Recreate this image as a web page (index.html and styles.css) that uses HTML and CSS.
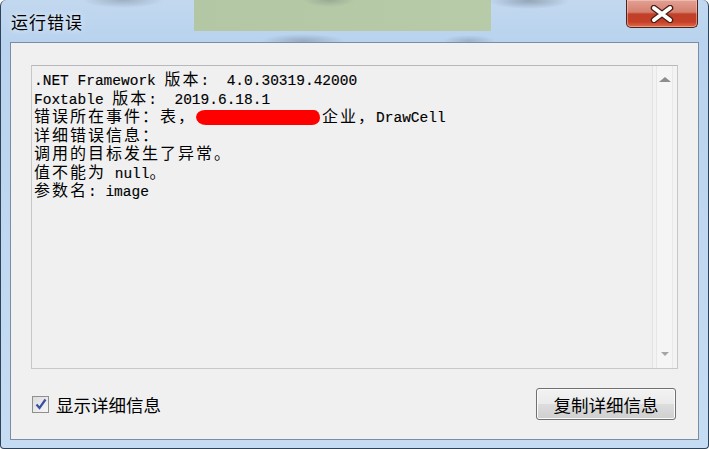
FILE: index.html
```html
<!DOCTYPE html>
<html lang="zh-CN">
<head>
  <meta charset="UTF-8">
  <meta name="viewport" content="width=device-width, initial-scale=1.0">
  <title>运行错误</title>
  <link rel="stylesheet" href="styles.css">
</head>
<body>

  <div class="window">
    <div class="titlebar">
      <span class="title">运行错误</span>
      <button class="close-btn" title="关闭">
        <svg width="26" height="18" viewBox="0 0 26 18">
          <path d="M5 3 L21 15 M21 3 L5 15" stroke="#4b1d14" stroke-width="6.5" stroke-linecap="round"/>
          <path d="M5 3 L21 15 M21 3 L5 15" stroke="#ffffff" stroke-width="4" stroke-linecap="round"/>
        </svg>
      </button>
    </div>

    <div class="client">
      <div class="details">
        <div class="text">
          <div class="line"><span class="en">.NET Framework </span>版本<span class="en">:  4.0.30319.42000</span></div>
          <div class="line"><span class="en">Foxtable </span>版本<span class="en">:  2019.6.18.1</span></div>
          <div class="line">错误所在事件：表，<span class="redact"></span>企业，<span class="en">DrawCell</span></div>
          <div class="line">详细错误信息：</div>
          <div class="line">调用的目标发生了异常。</div>
          <div class="line">值不能为<span class="en"> null</span>。</div>
          <div class="line">参数名<span class="en">: image</span></div>
        </div>
        <div class="scrollbar">
          <div class="arrow arrow-up"></div>
          <div class="track"></div>
          <div class="arrow arrow-down"></div>
        </div>
      </div>

      <div class="footer">
        <label class="check">
          <span class="box">
            <svg width="12" height="12" viewBox="0 0 12 12">
              <path d="M1.5 6.5 L4.5 10 L10.5 1.5" fill="none" stroke="#3b4fa3" stroke-width="2.2"/>
            </svg>
          </span>
          显示详细信息
        </label>
        <button class="copy-btn">复制详细信息</button>
      </div>
    </div>
  </div>

</body>
</html>
```

FILE: styles.css
```css
body {
  margin: 0;
  background: #ffffff;
  font-family: "Noto Sans CJK SC", "Microsoft YaHei", sans-serif;
}
.window {
  width: 709px;
  height: 449px;
  box-sizing: border-box;
  padding: 0 9px 8px 9px;
  display: flex;
  flex-direction: column;
  border: 1px solid #2f4358;
  border-top: none;
  border-radius: 6px 6px 4px 4px;
  background:
    radial-gradient(ellipse 40px 8px at 122px 0px, rgba(90,100,110,0.35), transparent),
    radial-gradient(ellipse 26px 7px at 328px 0px, rgba(90,100,110,0.3), transparent),
    radial-gradient(ellipse 40px 8px at 528px 1px, rgba(80,90,100,0.4), transparent),
    radial-gradient(ellipse 42px 7px at 302px 41px, rgba(70,80,95,0.3), transparent),
    radial-gradient(ellipse 26px 6px at 468px 41px, rgba(70,80,95,0.25), transparent),
    linear-gradient(to right, transparent 193px, #b4c7a4 193px, #b8cba8 490px, transparent 490px) 0 0 / 100% 31px no-repeat,
    linear-gradient(to bottom, #c2d8ef, #b9d3ee 40px, #c6dcf3 100%);
  overflow: hidden;
}
.titlebar {
  height: 42px;
  flex-shrink: 0;
  display: flex;
  align-items: flex-start;
}
.title {
  margin-top: 9px;
  margin-left: 1px;
  font-size: 17px;
  letter-spacing: 1px;
  color: #000;
  text-shadow: 0 0 6px rgba(255,255,255,0.9);
}
.close-btn {
  margin-left: auto;
  margin-right: 1px;
  width: 72px;
  height: 28px;
  padding: 0;
  border: 1px solid #4d231c;
  border-top: none;
  border-radius: 0 0 5px 5px;
  background: linear-gradient(to bottom, #e2a194 0%, #d5806f 45%, #c0402b 52%, #c43f27 80%, #e0694b 100%);
  box-shadow: inset 0 0 0 1px rgba(255,220,210,0.45);
  display: flex;
  align-items: center;
  justify-content: center;
}
.client {
  flex: 1;
  background: #f0f0f0;
  border: 1px solid #7a8da5;
  padding: 22px 20px 0 20px;
  display: flex;
  flex-direction: column;
}
.details {
  height: 304px;
  box-sizing: border-box;
  border: 1px solid #c5c7cb;
  border-top-color: #b6b8bc;
  background: #f0f0f0;
  display: flex;
}
.text {
  flex: 1;
  padding: 3px 0 0 2px;
  font-family: "Noto Sans CJK SC", sans-serif;
  font-size: 16px;
  letter-spacing: 2px;
  color: #000;
}
.line {
  height: 18.5px;
  line-height: 18.5px;
  white-space: pre;
}
.en {
  font-family: "Liberation Mono", "DejaVu Sans Mono", monospace;
  font-size: 14.5px;
  letter-spacing: 0;
  color: #000;
  -webkit-text-stroke: 0.15px #000;
}
.redact {
  display: inline-block;
  width: 124px;
  height: 15px;
  margin-right: 2px;
  vertical-align: -3px;
  background: #ff0000;
  border-radius: 9px 6px 8px 10px / 7px 8px 7px 8px;
}
.scrollbar {
  width: 24px;
  border-left: 1px solid #e2e2e2;
  background: linear-gradient(to right, #f3f3f3 0, #f3f3f3 3px, #e6e6e6 3px, #e6e6e6 4px, #f5f5f5 4px, #f5f5f5 19px, #e8e8e8 19px, #e8e8e8 20px, #f3f3f3 20px);
  display: flex;
  flex-direction: column;
}
.arrow {
  height: 28px;
  display: flex;
  justify-content: center;
}
.arrow-up {
  align-items: flex-start;
}
.arrow-up::before {
  content: "";
  margin-top: 11px;
  border-left: 6px solid transparent;
  border-right: 6px solid transparent;
  border-bottom: 5px solid #8d8d8d;
}
.arrow-down {
  align-items: flex-end;
}
.arrow-down::before {
  content: "";
  margin-bottom: 12px;
  border-left: 4px solid transparent;
  border-right: 4px solid transparent;
  border-top: 4px solid #a5a5a5;
}
.track {
  flex: 1;
}
.footer {
  margin-top: 19px;
  height: 32px;
  display: flex;
  align-items: center;
  justify-content: space-between;
  padding: 0 2px 0 1px;
}
.check {
  display: flex;
  align-items: center;
  gap: 7px;
  font-size: 17.5px;
  color: #000;
}
.box {
  width: 15px;
  height: 15px;
  border: 1px solid #8e8f8f;
  background: linear-gradient(135deg, #dcdcdc, #f6f6f6);
  display: flex;
  align-items: center;
  justify-content: center;
}
.copy-btn {
  width: 140px;
  height: 32px;
  padding: 0;
  font-family: "Noto Sans CJK SC", sans-serif;
  font-size: 17.5px;
  color: #000;
  border: 1px solid #707070;
  border-radius: 3px;
  background: linear-gradient(to bottom, #f2f2f2 0%, #ebebeb 50%, #dddddd 51%, #cfcfcf 100%);
  box-shadow: inset 0 0 0 1px #fbfbfb;
}
```
